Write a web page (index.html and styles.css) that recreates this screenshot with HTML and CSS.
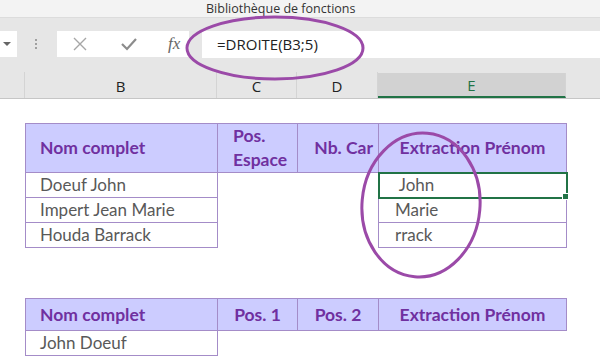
FILE: index.html
```html
<!DOCTYPE html>
<html>
<head>
	<title>Bibliothèque de fonctions</title>
	<link rel="stylesheet" href="styles.css">
</head>
<body>
	<div class="window">
		<div class="ribbon-title">Bibliothèque de fonctions</div>

		<div class="formula-bar">
			<div class="name-box"><span class="arrow"></span></div>
			<div class="grip"><i></i><i></i><i></i></div>
			<div class="buttons">
				<svg class="btn-x" width="14" height="14" viewBox="0 0 14 14"><path d="M1 1L13 13M13 1L1 13" stroke="#a6a6a6" stroke-width="1.4" fill="none"/></svg>
				<svg class="btn-ok" width="16" height="14" viewBox="0 0 16 14"><path d="M1 7L6 12L15 2" stroke="#8c8c8c" stroke-width="2.2" fill="none"/></svg>
				<span class="fx">fx</span>
			</div>
			<div class="formula">=DROITE(B3;5)</div>
		</div>

		<div class="col-headers">
			<div class="corner"></div>
			<div class="col col-b">B</div>
			<div class="col col-c">C</div>
			<div class="col col-d">D</div>
			<div class="col col-e selected">E</div>
			<div class="col col-rest"></div>
		</div>

		<div class="sheet">
			<table class="data first">
				<colgroup><col class="w-b"><col class="w-c"><col class="w-d"><col class="w-e"></colgroup>
				<tr class="head tall">
					<th class="left">Nom complet</th>
					<th class="left pos">Pos. Espace</th>
					<th class="right">Nb. Car</th>
					<th>Extraction Prénom</th>
				</tr>
				<tr>
					<td class="name">Doeuf John</td>
					<td class="blank"></td>
					<td class="blank"></td>
					<td class="result active"><span class="pre"> John</span><span class="handle"></span></td>
				</tr>
				<tr>
					<td class="name">Impert Jean Marie</td>
					<td class="blank"></td>
					<td class="blank"></td>
					<td class="result">Marie</td>
				</tr>
				<tr>
					<td class="name">Houda Barrack</td>
					<td class="blank"></td>
					<td class="blank"></td>
					<td class="result">rrack</td>
				</tr>
			</table>

			<table class="data second">
				<colgroup><col class="w-b"><col class="w-c"><col class="w-d"><col class="w-e"></colgroup>
				<tr class="head short">
					<th class="left">Nom complet</th>
					<th>Pos. 1</th>
					<th>Pos. 2</th>
					<th>Extraction Prénom</th>
				</tr>
				<tr>
					<td class="name">John Doeuf</td>
					<td class="blank"></td>
					<td class="blank"></td>
					<td class="blank"></td>
				</tr>
			</table>
		</div>

		<svg class="marks" width="600" height="356" viewBox="0 0 600 356">
			<ellipse cx="275" cy="48" rx="88" ry="31" fill="none" stroke="#9b4aa8" stroke-width="3"/>
			<ellipse cx="421" cy="205" rx="59" ry="72" transform="rotate(5 421 205)" fill="none" stroke="#9b4aa8" stroke-width="3"/>
		</svg>
	</div>
</body>
</html>
```

FILE: styles.css
```css
body {
	margin: 0;
	background-color: #ffffff;
	overflow: hidden;
}

.window {
	position: relative;
	width: 600px;
	height: 356px;
	overflow: hidden;
}

.ribbon-title {
	height: 18px;
	background-color: #f3f3f3;
	border-bottom: 1px solid #dcdcdc;
	box-sizing: border-box;
	padding-left: 206px;
	font-family: "Open Sans", sans-serif;
	font-size: 12.5px;
	line-height: 17px;
	color: #333333;
}

.formula-bar {
	height: 54px;
	background-color: #e6e6e6;
	display: flex;
	align-items: center;
	padding-bottom: 2px;
	box-sizing: border-box;
}

.name-box {
	width: 17px;
	height: 26px;
	background-color: #ffffff;
	display: flex;
	align-items: center;
	justify-content: center;
}

.name-box .arrow {
	width: 0;
	height: 0;
	border-left: 4px solid transparent;
	border-right: 4px solid transparent;
	border-top: 4px solid #666666;
	margin-left: -4px;
}

.grip {
	width: 4px;
	margin: 0 18px 0 18px;
	display: flex;
	flex-direction: column;
	gap: 2px;
}

.grip i {
	width: 2px;
	height: 2px;
	background-color: #a0a0a0;
}

.buttons {
	width: 132px;
	height: 26px;
	background-color: #ffffff;
	display: flex;
	align-items: center;
	position: relative;
}

.btn-x {
	margin-left: 16px;
}

.btn-ok {
	margin-left: 34px;
}

.fx {
	margin-left: 31px;
	font-family: "Liberation Serif", serif;
	font-style: italic;
	font-size: 17px;
	color: #666666;
}

.formula {
	margin-left: 13px;
	flex: 1;
	height: 27px;
	background-color: #ffffff;
	padding-left: 15px;
	font-family: "Open Sans", sans-serif;
	font-size: 15px;
	line-height: 27px;
	color: #222222;
}

.col-headers {
	height: 26px;
	display: flex;
	background-color: #e6e6e6;
	border-bottom: 1px solid #c6c6c6;
	font-family: "Open Sans", sans-serif;
	font-size: 15px;
	color: #222222;
}

.corner {
	width: 25px;
	border-right: 1px solid #d4d4d4;
	box-sizing: border-box;
}

.col {
	box-sizing: border-box;
	border-right: 1px solid #d4d4d4;
	text-align: center;
	line-height: 28px;
}

.col-b { width: 192px; }
.col-c { width: 80px; }
.col-d { width: 81px; }
.col-e { width: 188px; }
.col-rest { flex: 1; border-right: none; }

.col.selected {
	background-color: #d2d2d2;
	color: #217346;
	border-bottom: 2px solid #217346;
	margin-top: 1px;
	line-height: 24px;
}

.sheet {
	padding: 24px 0 0 25px;
}

.data {
	border-collapse: collapse;
	table-layout: fixed;
	width: 542px;
	font-family: Lato, sans-serif;
	font-size: 17px;
}

.data.second {
	margin-top: 50px;
}

.w-b { width: 192px; }
.w-c { width: 80px; }
.w-d { width: 81px; }
.w-e { width: 188px; }

.data th {
	background-color: #ccccff;
	border: 1px solid #a48cc8;
	color: #7030a0;
	font-weight: bold;
	font-size: 17.5px;
	text-align: center;
	padding: 0 2px;
	line-height: 24px;
}

.data th.left {
	text-align: left;
	padding-left: 14px;
}

.data th.pos {
	padding-left: 15px;
}

.data th.right {
	text-align: right;
	padding-right: 5px;
}

.head.tall th {
	height: 48px;
}

.head.short th {
	height: 31px;
}

.data td {
	height: 24px;
	padding: 0;
	color: #595959;
	line-height: 22px;
}

.data td.name {
	border: 1px solid #a48cc8;
	padding-left: 14px;
}

.data td.result {
	border: 1px solid #a48cc8;
	padding-left: 16px;
}

.data td.blank {
	border: none;
}

.pre {
	white-space: pre;
}

.data td.active {
	position: relative;
	outline: 2px solid #217346;
	outline-offset: -1px;
}

.handle {
	position: absolute;
	right: -3px;
	bottom: -3px;
	width: 5px;
	height: 5px;
	background-color: #217346;
	border: 1px solid #ffffff;
}

.marks {
	position: absolute;
	top: 0;
	left: 0;
	pointer-events: none;
}
```
